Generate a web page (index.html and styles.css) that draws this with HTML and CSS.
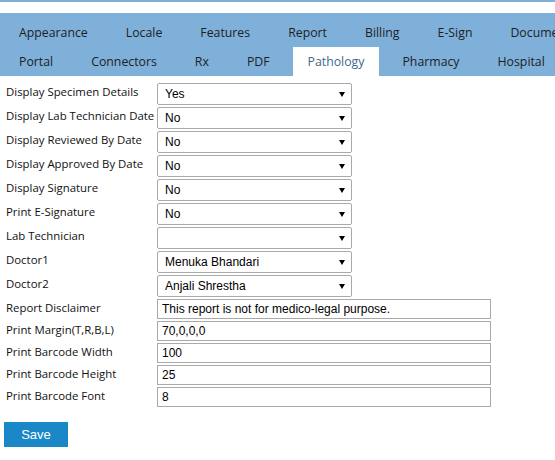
FILE: index.html
```html
<!DOCTYPE html>
<html>
<head>
<meta charset="utf-8">
<link rel="stylesheet" href="styles.css">
</head>
<body>
<div class="topline"></div>
<nav class="tabs">
  <a class="tab">Appearance</a><a class="tab">Locale</a><a class="tab">Features</a><a class="tab">Report</a><a class="tab">Billing</a><a class="tab">E-Sign</a><a class="tab">Documents</a><a class="tab">Portal</a><a class="tab">Connectors</a><a class="tab">Rx</a><a class="tab">PDF</a><a class="tab active">Pathology</a><a class="tab">Pharmacy</a><a class="tab">Hospital</a>
</nav>
<form class="form">
  <label class="lbl">Display Specimen Details</label>
  <span class="sel"><select><option>Yes</option><option>No</option></select></span>
  <label class="lbl">Display Lab Technician Date</label>
  <span class="sel"><select><option>No</option><option>Yes</option></select></span>
  <label class="lbl">Display Reviewed By Date</label>
  <span class="sel"><select><option>No</option><option>Yes</option></select></span>
  <label class="lbl">Display Approved By Date</label>
  <span class="sel"><select><option>No</option><option>Yes</option></select></span>
  <label class="lbl">Display Signature</label>
  <span class="sel"><select><option>No</option><option>Yes</option></select></span>
  <label class="lbl">Print E-Signature</label>
  <span class="sel"><select><option>No</option><option>Yes</option></select></span>
  <label class="lbl">Lab Technician</label>
  <span class="sel"><select><option></option></select></span>
  <label class="lbl">Doctor1</label>
  <span class="sel"><select><option>Menuka Bhandari</option></select></span>
  <label class="lbl">Doctor2</label>
  <span class="sel"><select><option>Anjali Shrestha</option></select></span>
  <label class="lbl">Report Disclaimer</label>
  <input class="txt" type="text" value="This report is not for medico-legal purpose.">
  <label class="lbl">Print Margin(T,R,B,L)</label>
  <input class="txt" type="text" value="70,0,0,0">
  <label class="lbl">Print Barcode Width</label>
  <input class="txt" type="text" value="100">
  <label class="lbl">Print Barcode Height</label>
  <input class="txt" type="text" value="25">
  <label class="lbl">Print Barcode Font</label>
  <input class="txt" type="text" value="8">
</form>
<div class="actions"><button class="save" type="button">Save</button></div>
</body>
</html>
```
FILE: styles.css
```css
html, body {
  margin: 0;
  padding: 0;
  overflow: hidden;
  background: #fff;
}
body {
  width: 555px;
  font-family: "Open Sans", "DejaVu Sans", sans-serif;
  color: #222;
}
.topline {
  height: 2px;
  background: #7fb0da;
  margin-bottom: 11px;
}
.tabs {
  width: 620px;
  background: #7fb0da;
  padding-top: 5px;
  display: flex;
  flex-wrap: wrap;
  box-sizing: border-box;
}
.tab {
  display: block;
  margin: 0 4px;
  padding: 0 15px;
  height: 29px;
  line-height: 29px;
  font-size: 12.3px;
  color: #1e1e1e;
  white-space: nowrap;
}
.tab.active {
  background: #fff;
  color: #3d6a8a;
}
.form {
  display: grid;
  grid-template-columns: 151px 195px;
  row-gap: 2px;
  padding: 7px 0 0 6px;
  margin: 0;
}
.lbl {
  font-size: 11.4px;
  line-height: 16px;
  padding-top: 1px;
  color: #111;
  white-space: nowrap;
}
.sel {
  position: relative;
  display: block;
  width: 195px;
  height: 22px;
}
.sel select {
  display: block;
  appearance: none;
  -webkit-appearance: none;
  width: 195px;
  height: 22px;
  box-sizing: border-box;
  border: 1px solid #a9a9a9;
  border-radius: 2px;
  background: #fff;
  font-family: "Liberation Sans", Arial, sans-serif;
  font-size: 12px;
  color: #000;
  padding: 0 0 0 7px;
  margin: 0;
}
.sel::after {
  content: "";
  position: absolute;
  right: 7px;
  top: 9px;
  border-left: 3px solid transparent;
  border-right: 3px solid transparent;
  border-top: 5px solid #000;
  pointer-events: none;
}
.txt {
  display: block;
  width: 334px;
  height: 20px;
  box-sizing: border-box;
  border: 1px solid #a9a9a9;
  border-radius: 0;
  font-family: "Liberation Sans", Arial, sans-serif;
  font-size: 12px;
  color: #000;
  padding: 0 4px;
  margin: 0;
}
.actions {
  padding: 15px 0 0 4px;
}
.save {
  display: block;
  width: 64px;
  height: 25px;
  border: 0;
  border-radius: 0;
  background: #1a87c6;
  color: #fff;
  font-family: "Liberation Sans", Arial, sans-serif;
  font-size: 13px;
  padding: 0;
  margin: 0;
}
```
